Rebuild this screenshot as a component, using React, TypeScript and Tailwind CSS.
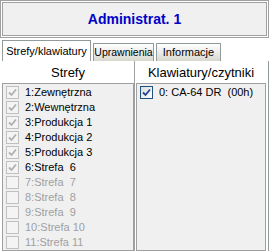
import React from "react";

const zones = [
  { id: 1, name: "1:Zewnętrzna", checked: true, enabled: true },
  { id: 2, name: "2:Wewnętrzna", checked: true, enabled: true },
  { id: 3, name: "3:Produkcja 1", checked: true, enabled: true },
  { id: 4, name: "4:Produkcja 2", checked: true, enabled: true },
  { id: 5, name: "5:Produkcja 3", checked: true, enabled: true },
  { id: 6, name: "6:Strefa  6", checked: true, enabled: true },
  { id: 7, name: "7:Strefa  7", checked: false, enabled: false },
  { id: 8, name: "8:Strefa  8", checked: false, enabled: false },
  { id: 9, name: "9:Strefa  9", checked: false, enabled: false },
  { id: 10, name: "10:Strefa 10", checked: false, enabled: false },
  { id: 11, name: "11:Strefa 11", checked: false, enabled: false },
];

function Check({ checked, active }: { checked: boolean; active?: boolean }) {
  return (
    <span
      className={
        "flex-none w-[13px] h-[13px] border flex items-center justify-center " +
        (active
          ? "border-[#1c5180] bg-gradient-to-br from-[#dcdcd7] to-white"
          : "border-[#c0c0c0] bg-[#f4f4f4]")
      }
    >
      {checked && (
        <svg width="9" height="9" viewBox="0 0 9 9">
          <path
            d="M1 4.5 L3.5 7 L8 1.5"
            fill="none"
            stroke={active ? "#21459b" : "#b0b0b0"}
            strokeWidth="1.8"
          />
        </svg>
      )}
    </span>
  );
}

export default function App() {
  return (
    <div className="w-[269px] h-[251px] overflow-hidden bg-white font-['Liberation_Sans',Arial,sans-serif] flex flex-col">
      {/* header panel */}
      <div className="h-[38px] flex-none border border-[#a0a0a0] p-[1px] bg-white">
        <div className="h-full border border-[#a0a0a0] bg-[#f0f0f0] flex items-center justify-center">
          <span className="text-[14px] font-bold text-[#0000c8] leading-none">
            Administrat. 1
          </span>
        </div>
      </div>

      {/* tabs */}
      <div className="h-[22px] flex-none flex items-end pl-[2px] gap-[2px] mt-[1px]">
        <div className="w-[89px] h-[21px] bg-white border border-b-0 border-[#919b9c] flex items-center justify-center text-[11px] text-black whitespace-nowrap">
          Strefy/klawiatury
        </div>
        <div className="w-[61px] h-[18px] bg-gradient-to-b from-white to-[#d8d8d0] border border-b-0 border-[#919b9c] flex items-center justify-center text-[10.5px] text-black whitespace-nowrap">
          Uprawnienia
        </div>
        <div className="w-[65px] h-[18px] bg-gradient-to-b from-white to-[#d8d8d0] border border-b-0 border-[#919b9c] flex items-center justify-center text-[11px] text-black whitespace-nowrap">
          Informacje
        </div>
      </div>

      {/* tab sheet */}
      <div className="flex-1 flex border-r border-[#919b9c] bg-white">
        <div className="w-[135px] flex flex-col pl-[2px] border-r border-[#a0a0a0]">
          <div className="h-[22px] pt-[2px] flex items-center justify-center text-[13px] text-black">
            Strefy
          </div>
          <div className="flex-1 bg-[#f0f0f0] border border-[#a0a0a0] pt-[1px]">
            {zones.map((z) => (
              <div key={z.id} className="h-[15px] flex items-center gap-[6px] pl-[3px]">
                <Check checked={z.checked} />
                <span
                  className={
                    "text-[11px] whitespace-pre leading-none " +
                    (z.enabled ? "text-black" : "text-[#a0a0a0]")
                  }
                >
                  {z.name}
                </span>
              </div>
            ))}
          </div>
        </div>
        <div className="flex-1 flex flex-col pl-[1px] pr-[2px]">
          <div className="h-[22px] pt-[2px] flex items-center justify-center text-[13px] text-black">
            Klawiatury/czytniki
          </div>
          <div className="flex-1 bg-[#f0f0f0] border border-[#a0a0a0] pt-[1px]">
            <div className="h-[15px] flex items-center gap-[6px] pl-[3px]">
              <Check checked active />
              <span className="text-[11px] whitespace-pre leading-none text-black">
                0: CA-64 DR  (00h)
              </span>
            </div>
          </div>
        </div>
      </div>
    </div>
  );
}
